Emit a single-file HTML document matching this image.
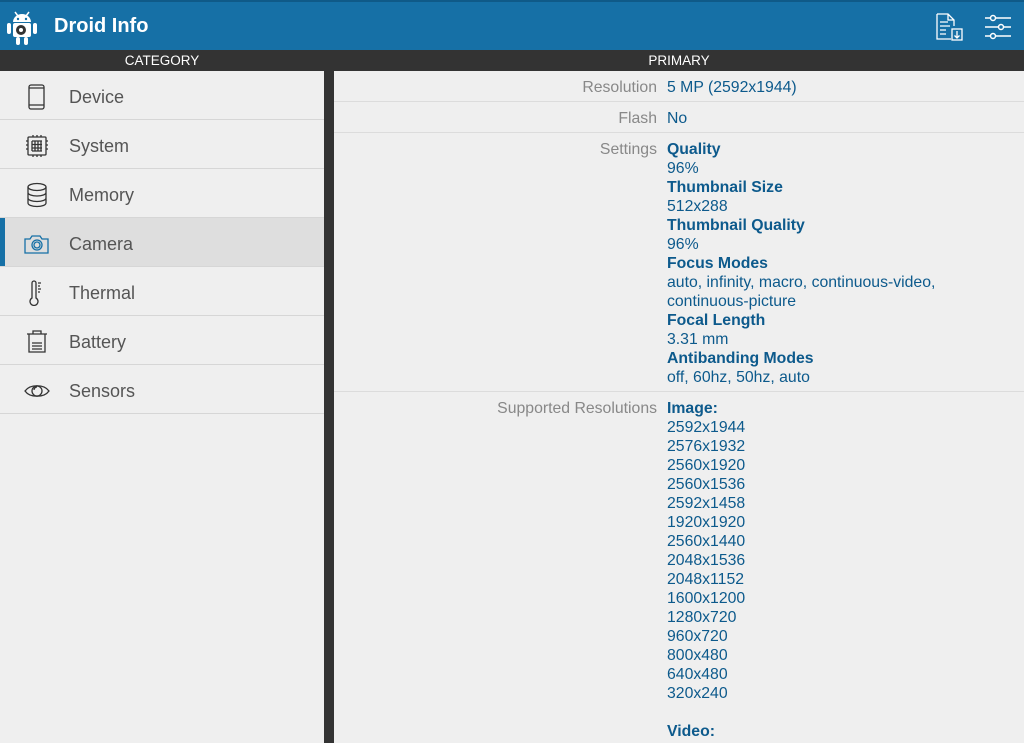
<!DOCTYPE html><html><head><style>
*{margin:0;padding:0;box-sizing:border-box}
html,body{width:1024px;height:743px;overflow:hidden}
body{background:#efefef;font-family:"Liberation Sans",sans-serif;position:relative}
.hdr{position:absolute;left:0;top:0;width:1024px;height:50px;background:#1670a6;border-top:2px solid #0f5a88}
.title{position:absolute;left:54px;top:13px;color:#fff;font-size:20px;font-weight:bold}
.bar{position:absolute;top:50px;height:21px;background:#333;color:#fff;font-size:13.5px;text-align:center;line-height:22px}
.div{position:absolute;left:324px;top:71px;width:10px;height:672px;background:#333}
.item{position:absolute;left:0;width:324px;height:49px;border-bottom:1px solid #d6d6d6;font-size:18px;color:#555;line-height:52px;padding-left:69px}
.item svg{position:absolute;left:24px;top:13px}
.sel{background:#dedede}
.sel:before{content:"";position:absolute;left:0;top:0;width:5px;height:48px;background:#1670a6}
.row{position:absolute;left:334px;width:690px;border-bottom:1px solid #dcdcdc;font-size:15.8px;line-height:19px}
.lab{position:absolute;right:367px;top:0;color:#888;white-space:nowrap}
.val{position:absolute;left:333px;top:0;color:#0d5a8c;white-space:nowrap}
b{font-weight:bold}
</style></head><body>
<div class="hdr">
<svg style="position:absolute;left:6px;top:6px" width="32" height="38" viewBox="0 0 32 38"><g fill="#fff"><path d="M7 14a9 8 0 0 1 18 0z"/><rect x="7" y="15" width="18" height="14" rx="2"/><rect x="1" y="15" width="4" height="11" rx="2"/><rect x="27" y="15" width="4" height="11" rx="2"/><rect x="10" y="29" width="4" height="8" rx="2"/><rect x="18" y="29" width="4" height="8" rx="2"/><path d="M9 4l3 4M23 4l-3 4" stroke="#fff" stroke-width="1.5"/></g><circle cx="12" cy="11" r="1.2" fill="#1670a6"/><circle cx="20" cy="11" r="1.2" fill="#1670a6"/><circle cx="15" cy="22" r="5" fill="#333"/><circle cx="15" cy="22" r="2" fill="#fff"/></svg>
<div class="title">Droid Info</div>
<svg style="position:absolute;left:935px;top:10px" width="30" height="30" viewBox="0 0 30 30" fill="none" stroke="#fff" stroke-width="1.3"><path d="M2 2h11l6 6v6M2 2v25h14M13 2v6h6"/><path d="M5 10h8M5 14h10M5 18h6M5 22h6"/><rect x="17" y="17" width="10" height="11"/><path d="M22 19v7M19.5 23.5l2.5 2.5 2.5-2.5"/></svg>
<svg style="position:absolute;left:984px;top:10px" width="30" height="30" viewBox="0 0 30 30" fill="none" stroke="#fff" stroke-width="1.5"><path d="M1 6h26M1 15h26M1 24h26"/><circle cx="9" cy="6" r="2.5" fill="#1670a6"/><circle cx="17" cy="15" r="2.5" fill="#1670a6"/><circle cx="9" cy="24" r="2.5" fill="#1670a6"/></svg>
</div>
<div class="bar" style="left:0;width:324px">CATEGORY</div>
<div class="bar" style="left:324px;width:700px;padding-left:10px">PRIMARY</div>
<div class="div"></div>

<div class="item" style="top:71px"><svg width="26" height="26" viewBox="0 0 26 26" fill="none" stroke="#333" stroke-width="1.3"><rect x="5" y="1" width="15" height="24" rx="2"/><path d="M5 4h15M5 21h15"/></svg>Device</div>
<div class="item" style="top:120px"><svg width="26" height="26" viewBox="0 0 26 26" fill="none" stroke="#333" stroke-width="1.3"><rect x="4" y="4" width="18" height="18" rx="1"/><path d="M8 8v10M11 8v10M14 8v10M17 8v10M8 8h10M8 11.5h10M8 15h10M8 18h10M2 8h2M2 12h2M2 16h2M22 8h2M22 12h2M22 16h2M9 2v2M13 2v2M17 2v2M9 22v2M13 22v2M17 22v2"/></svg>System</div>
<div class="item" style="top:169px"><svg width="26" height="26" viewBox="0 0 26 26" fill="none" stroke="#333" stroke-width="1.3"><ellipse cx="13" cy="5" rx="9" ry="3.5"/><path d="M4 5v16c0 2 4 3.5 9 3.5s9-1.5 9-3.5V5M4 10.5c0 2 4 3.5 9 3.5s9-1.5 9-3.5M4 16c0 2 4 3.5 9 3.5s9-1.5 9-3.5"/></svg>Memory</div>
<div class="item sel" style="top:218px"><svg width="26" height="26" viewBox="0 0 26 26" fill="none" stroke="#1670a6" stroke-width="1.3"><path d="M1 8h5l2-3h8l2 3h6v14H1z"/><circle cx="13" cy="14" r="5"/><circle cx="13" cy="14" r="3"/></svg>Camera</div>
<div class="item" style="top:267px"><svg width="26" height="26" viewBox="0 0 26 26" fill="none" stroke="#333" stroke-width="1.3"><path d="M8 3a2 2 0 0 1 4 0v15a4 4 0 1 1-4 0z"/><path d="M14 3h3M14 6h2M14 9h3M14 12h2"/></svg>Thermal</div>
<div class="item" style="top:316px"><svg width="26" height="26" viewBox="0 0 26 26" fill="none" stroke="#333" stroke-width="1.3"><path d="M3 5h20M9 5V2h8v3M5 5v18h16V5"/><path d="M8 14h10M8 17h10M8 20h10"/></svg>Battery</div>
<div class="item" style="top:365px"><svg width="26" height="26" viewBox="0 0 26 26" fill="none" stroke="#333" stroke-width="1.3"><path d="M1 13c5-7 19-7 24 0-5 7-19 7-24 0z"/><circle cx="13" cy="13" r="5"/><path d="M10 12a3 3 0 0 1 3-3"/></svg>Sensors</div>

<div class="row" style="top:71px;height:31px"><div class="lab" style="top:7px">Resolution</div><div class="val" style="top:7px">5 MP (2592x1944)</div></div>
<div class="row" style="top:102px;height:31px"><div class="lab" style="top:7px">Flash</div><div class="val" style="top:7px">No</div></div>
<div class="row" style="top:133px;height:259px"><div class="lab" style="top:7px">Settings</div><div class="val" style="top:7px"><b>Quality</b><br>96%<br><b>Thumbnail Size</b><br>512x288<br><b>Thumbnail Quality</b><br>96%<br><b>Focus Modes</b><br>auto, infinity, macro, continuous-video,<br>continuous-picture<br><b>Focal Length</b><br>3.31 mm<br><b>Antibanding Modes</b><br>off, 60hz, 50hz, auto</div></div>
<div class="row" style="top:392px;height:351px;border:none"><div class="lab" style="top:7px">Supported Resolutions</div><div class="val" style="top:7px"><b>Image:</b><br>2592x1944<br>2576x1932<br>2560x1920<br>2560x1536<br>2592x1458<br>1920x1920<br>2560x1440<br>2048x1536<br>2048x1152<br>1600x1200<br>1280x720<br>960x720<br>800x480<br>640x480<br>320x240<br><br><b>Video:</b><br>1920x1080</div></div>
</body></html>
